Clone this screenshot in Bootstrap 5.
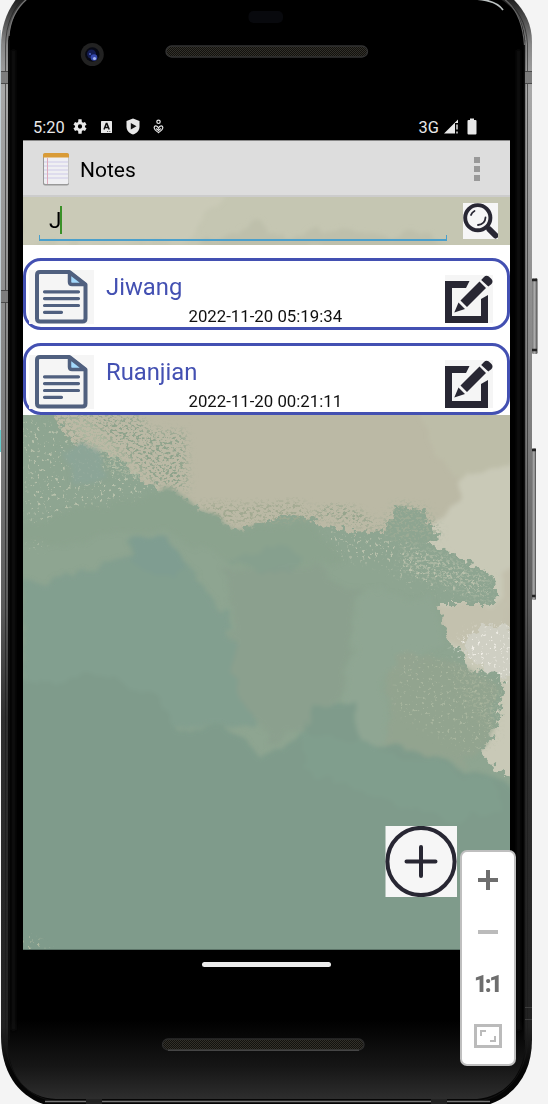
<!DOCTYPE html>
<html lang="en">
<head>
<meta charset="utf-8">
<meta name="viewport" content="width=device-width, initial-scale=1">
<title>Notes</title>
<link href="https://cdn.jsdelivr.net/npm/bootstrap@5.3.0/dist/css/bootstrap.min.css" rel="stylesheet">
<style>
body{background:#f4f4f4;font-family:Roboto,"Liberation Sans",sans-serif;overflow:hidden}
.device{width:548px;height:1104px}
.layer{left:0;top:0;z-index:0}
.front{position:relative;z-index:1}
.statusbar{height:140px;padding:0 33px 4px 10px;color:#e8e8e8;font-size:16.4px;line-height:19px}
.statusbar span{margin-bottom:-1px}
.screen{width:487px;margin-left:23px}
.appbar{height:57px;background:#ddd;border-top:1px solid #888;border-bottom:2px solid #ccc;padding:2px 30px 0 19px}
.apptitle{font-size:21px;color:#000;margin:1px 0 0 10px;line-height:24px}
.finder{height:48px;padding:6px 12px 0 16px}
.field{width:408px;height:38px;border:solid #4a9fcb;border-width:0 0 2px;font-size:22.5px;line-height:26px;padding:4px 0 0 10px;color:#000}
.field:before,.field:after{content:"";position:absolute;bottom:0;width:1px;height:4px;background:#4a9fcb}
.field:before{left:0}.field:after{right:0}
.caret{width:2px;height:28px;background:#399127;margin:-1px 0 0 -1px}
.notes{background:#fff;padding-top:13px;gap:13px;height:170px}
.note{height:72px;border:3px solid #4350b2;border-radius:18px;padding:0 14px 0 3px;background:#fff}
.note-name{font-size:23.8px;line-height:28px;color:#4350b2;margin-top:12px}
.note-date{font-size:16.8px;line-height:19px;color:#111;margin-left:82.5px;margin-top:6px}
.note-body{margin-left:12px}
.wall{height:535px;padding:411px 0 0 362px}
.homebar{width:129px;height:5px;border-radius:3px;background:#ececec;margin:12px 0 0 202px}
.zoomer{left:460px;top:850px;width:56px;height:216px;background:#fff;border:2px solid #bfbfbf;border-radius:7px;z-index:2;padding:2px 0 1px}
.zoomer>div{height:52px}
.actual-size{font-size:23px;font-weight:900;color:#6e6e6e;letter-spacing:-2.5px;line-height:24px;margin:2px 2px 0 0}
svg{display:block;flex:none}
</style>
</head>
<body>
<div class="device position-relative">

<!-- handset body -->
<svg class="layer position-absolute" width="548" height="1104" viewBox="0 0 548 1104">
<defs>
<linearGradient id="metal" x1="0" y1="0" x2="0" y2="1104" gradientUnits="userSpaceOnUse"><stop offset="0" stop-color="#222"/><stop offset=".04" stop-color="#888"/><stop offset=".08" stop-color="#a8a8a8"/><stop offset=".2" stop-color="#989898"/><stop offset=".4" stop-color="#7c7c7c"/><stop offset=".55" stop-color="#5a5a5a"/><stop offset=".65" stop-color="#303030"/><stop offset=".93" stop-color="#222"/><stop offset=".97" stop-color="#050505"/></linearGradient>
<linearGradient id="glow" x1="0" y1="1020" x2="0" y2="1098" gradientUnits="userSpaceOnUse"><stop offset="0" stop-color="#000"/><stop offset=".6" stop-color="#161616"/><stop offset="1" stop-color="#2d2d2d"/></linearGradient>
<linearGradient id="key" x1="0" x2="1"><stop offset="0" stop-color="#777"/><stop offset=".5" stop-color="#b0b0b0"/><stop offset="1" stop-color="#444"/></linearGradient>
<pattern id="mesh" width="2" height="2" patternUnits="userSpaceOnUse"><rect width="2" height="2" fill="#12110e"/><path d="M.5 0v1M1.500 1v1" stroke="#33312a"/></pattern>
<filter id="soft" filterUnits="userSpaceOnUse" x="0" y="0" width="548" height="1104"><feGaussianBlur stdDeviation="1.600"/></filter>
</defs>
<rect x="0" y="430" width="1" height="22" fill="#6cc"/><path d="M.5 30v400" stroke="#c4d0d6" stroke-width="1"/>
<path d="M17-2C6 12 1 28 1 46V1036C1 1074 20 1099 50 1106H484C514 1098 532 1074 532 1040V42C532 22 523 8 510-4Z" fill="url(#metal)"/>
<path d="M24-2C13 8 6 24 5.500 46V1040C7 1072 25 1098 55 1101H478C506 1098 525 1074 527.500 1044V44C526 22 518 8 502-2Z" fill="none" stroke="#1b1b1b" stroke-width="1" opacity=".6"/>
<path d="M29-2C14 10 8 27 8 46V1046C10 1078 28 1098 56 1099H477C505 1096 523 1076 525 1046V42C524 20 514 6 498-2Z" fill="url(#glow)"/>
<path d="M13.500 50V1030M518.500 50V1030" stroke="#242424" stroke-width="2.500" opacity=".75" filter="url(#soft)"/>
<path d="M9 40V1040M524.500 40V1040" stroke="#111" stroke-width="1.500"/>
<path d="M27-1C15 9 10 22 9 36" fill="none" stroke="#777" stroke-width="1.200"/>
<path d="M475-1Q496 0 503 10" fill="none" stroke="#bcc2c2" stroke-width="1.700"/>
<path d="M504-1C518 9 523 25 524.500 45" fill="none" stroke="#666" stroke-width="1.200"/>
<path d="M45 1101.500H490" stroke="#777" stroke-width="1.500"/>
<path d="M86 1099h16v5H86zM431 1099h16v5h-16z" fill="#222"/>
<path d="M1 71.500h7v12H1zM1 290.500h7v12H1zM525 71.500h7v12h-7z" fill="#7d7d7d"/><path d="M1 71.500h7M1 83.500h7M1 290.500h7M1 302.500h7M525 71.500h7M525 83.500h7" stroke="#4a4a4a"/>
<path d="M525 1007.500h7M525 1019.500h7" stroke="#444" stroke-width=".8"/>
<rect x="532" y="278" width="5.500" height="76" rx="1.500" fill="url(#key)"/><path d="M532 280h5M532 350h5" stroke="#222" stroke-width="2.500"/>
<rect x="532" y="448" width="4" height="152" rx="1.500" fill="url(#key)"/><path d="M532 450h4M532 596h3.500" stroke="#222" stroke-width="2.500"/>
<rect x="248.500" y="11" width="34.500" height="12" rx="5" fill="#08090d"/>
<circle cx="92.300" cy="54.500" r="11.500" fill="#222"/><circle cx="92.300" cy="54.500" r="7.200" fill="#070914"/><circle cx="91.500" cy="54" r="4.500" fill="#131b50"/><circle cx="94" cy="57.500" r="3.300" fill="#3548ad"/><circle cx="94.500" cy="58.500" r="1.600" fill="#a3b3ee"/><circle cx="90" cy="54" r="1" fill="#4e65c8"/>
<rect x="166" y="46" width="201.500" height="11" rx="5.500" fill="url(#mesh)" stroke="#333" stroke-width="1.300"/>
<rect x="162.500" y="1039" width="201.500" height="11" rx="5.500" fill="url(#mesh)" stroke="#2c2c2c" stroke-width="1.300"/><path d="M168 1050.200H359" stroke="#555"/>
</svg>

<div class="front">
<div class="statusbar screen d-flex align-items-end">
  <span>5:20</span>
  <svg width="16" height="19" style="margin-left:7px" viewBox="0 0 24 28" fill="#e8e8e8"><path fill-rule="evenodd" d="M19.400 13a7.500 7.500 0 0 0 0-2l2.400-1.800-2.300-4-2.900 1.200-1.800-1L14.400 1H9.600l-.4 4.400-1.800 1-2.900-1.200-2.300 4L4.600 11a7.500 7.500 0 0 0 0 2l-2.400 1.800 2.300 4 2.900-1.200 1.800 1 .4 4.400h4.800l.4-4.400 1.800-1 2.900 1.200 2.300-4zM12 8.800a3.200 3.200 0 1 1 0 6.400 3.200 3.200 0 0 1 0-6.400z" transform="translate(0 2)"/></svg>
  <svg width="13" height="19" style="margin-left:12px" viewBox="0 0 13 19"><rect x="1" y="4" width="11" height="12" rx=".6" fill="#e8e8e8"/><path d="M4 12.500 6.300 6.500h.6L9.200 12.500M5 10.500h3.300" stroke="#111" stroke-width="1.500" fill="none"/><path d="M7 14.500h4" stroke="#666" stroke-dasharray="1 .8"/></svg>
  <svg width="14" height="19" style="margin-left:13px" viewBox="0 0 14 19"><path d="M7 1.500 13.500 4v5.500c0 4-2.500 6.800-6.500 8-4-1.200-6.500-4-6.500-8V4z" fill="#e8e8e8"/><path d="M4.800 6v6.500L10.500 9.200z" fill="#111"/></svg>
  <svg width="11" height="19" style="margin-left:13px" viewBox="0 0 11 19" fill="none" stroke="#e8e8e8" stroke-width="1.200"><circle cx="5.500" cy="4.800" r="1.700"/><path d="M5.500 11C4.200 8 1 8.300 1.200 11c.3 2.300 2.800 3.300 4.300 4.600 1.500-1.300 4-2.300 4.300-4.600.2-2.700-3-3-4.300 0z"/><path d="M3.200 11.500l2.300 2 2.300-2"/></svg>
  <span class="ms-auto">3G</span>
  <svg width="15" height="19" style="margin-left:5px" viewBox="0 0 15 19"><path d="M0 16.500 14 2.500V6h-3v10.500z" fill="#e8e8e8"/><path d="M13 7.500v5M13 14.500v2" stroke="#ddd" stroke-width="1.500"/></svg>
  <svg width="10" height="19" style="margin-left:8px" viewBox="0 0 10 19"><path d="M3 1.500h4V3h1.500a1 1 0 0 1 1 1v12.500a1 1 0 0 1-1 1h-7a1 1 0 0 1-1-1V4a1 1 0 0 1 1-1H3z" fill="#e8e8e8"/></svg>
</div>

<div class="screen position-relative overflow-hidden">
<!-- painted wallpaper -->
<svg class="layer position-absolute" width="487" height="810" viewBox="23 140 487 810">
<defs>
<filter id="rough" x="-5%" y="-5%" width="110%" height="110%"><feTurbulence type="fractalNoise" baseFrequency=".14" numOctaves="4" seed="4"/><feDisplacementMap in="SourceGraphic" scale="16" xChannelSelector="R" yChannelSelector="G"/></filter>
<filter id="patch" x="-5%" y="-5%" width="110%" height="110%"><feTurbulence type="fractalNoise" baseFrequency=".04" numOctaves="3" seed="9"/><feDisplacementMap in="SourceGraphic" scale="22" xChannelSelector="R" yChannelSelector="G"/><feGaussianBlur stdDeviation="2"/></filter>
<filter id="fleck" x="-10%" y="-10%" width="120%" height="120%"><feGaussianBlur in="SourceGraphic" stdDeviation="5" result="s"/><feTurbulence type="fractalNoise" baseFrequency=".3 .4" numOctaves="4" seed="7"/><feColorMatrix values="0 0 0 0 0 0 0 0 0 0 0 0 0 0 0 7 0 0 0 -3.500" result="n"/><feComposite in="s" in2="n" operator="in"/></filter>
<filter id="dots" x="-10%" y="-10%" width="120%" height="120%"><feGaussianBlur in="SourceGraphic" stdDeviation="5" result="s"/><feTurbulence type="fractalNoise" baseFrequency=".32" numOctaves="4" seed="13"/><feColorMatrix values="0 0 0 0 0 0 0 0 0 0 0 0 0 0 0 9 0 0 0 -5.700" result="n"/><feComposite in="s" in2="n" operator="in"/></filter>
</defs>
<rect x="23" y="140" width="487" height="810" fill="#bbb9a5"/>
<rect x="23" y="195" width="487" height="50" fill="#c5c6b2"/>
<g filter="url(#patch)"><path d="M23 190H230L180 245H23z" fill="#cacab7"/><path d="M198 250Q225 224 252 224Q278 228 288 238Q330 224 385 238L412 228 450 250z" fill="#bebfab"/><path d="M420 410H520V470L455 478 430 440z" fill="#bdbda8"/><path d="M462 478 520 458V800H400L430 530 450 515z" fill="#c9c9b7"/><path d="M505 570H520V640H495z" fill="#c2bfac"/><path d="M430 605 510 600 500 640 440 640z" fill="#c3c1ae"/></g>
<path d="M462 640 480 630 490 624 514 628V680L485 672 468 656z" fill="#cfcfc3" filter="url(#rough)"/>
<g filter="url(#rough)"><path d="M15 405 48 412 72 440 93 450 120 458 138 478 158 488 174 492 192 504 215 518 240 530 285 516 305 518 350 532 386 530 400 505 420 510 440 538 424 543 446 550 470 562 495 578 497 604 438 604 446 640 464 652 471 672 500 674 503 690 500 716 482 754 496 770 520 782V970H10z" fill="#8ea591"/></g>
<path d="M48 410 140 415 148 430 185 432 188 490 165 488 120 465 75 450z" fill="#8fa38c" filter="url(#fleck)"/>
<path d="M195 502 245 504 300 500 315 520 220 525z" fill="#a1a991" filter="url(#fleck)"/>
<path d="M305 515 330 505 355 508 385 530z" fill="#92a28a" filter="url(#fleck)"/>
<path d="M380 525 398 502 425 508 442 535 400 545z" fill="#9dab95" filter="url(#fleck)"/>
<path d="M23 415 75 435 165 490 110 515 30 550z" fill="#b8c1ab" filter="url(#dots)"/>
<path d="M60 415 90 420 150 480 110 470z" fill="#bfc3ac" filter="url(#fleck)" opacity=".7"/>
<path d="M320 530 400 540 490 580 495 604 410 585 385 565 330 555z" fill="#bac1ac" filter="url(#dots)"/>
<path d="M405 545 445 555 490 580 490 604 450 585 400 570z" fill="#c3c6b1" filter="url(#fleck)" opacity=".55"/>
<path d="M450 650 470 630 510 625V690z" fill="#f0eee6" filter="url(#dots)"/>
<g filter="url(#patch)">
<path d="M60 445 100 450 110 480 75 485z" fill="#8ca598" opacity=".8"/>
<path d="M130 498 165 490 210 515 235 530 310 520 350 560 250 570 205 550 165 530 23 545V525z" fill="#8ba38e"/>
<path d="M23 585 75 575 132 555V539H168L190 565 218 595 233 650 245 680 255 725 23 730z" fill="#829f8f"/>
<path d="M225 570 315 565 360 590 350 650 335 710 270 745 235 690z" fill="#8ba08e"/>
<path d="M365 590 435 600 440 645 415 665 385 680 385 745 350 745 342 700z" fill="#8fa693"/>
<path d="M395 655 460 665 495 685 490 735 470 765 420 760 385 740z" fill="#94a48f" opacity=".7"/>
<path d="M10 680 60 680 110 675 160 700 175 730 222 726 265 755 301 735 311 706 358 704 360 750 400 744 440 764 475 770 530 795V970H10z" fill="#7f9b8b"/>
<path d="M135 540 168 538 185 563 175 580 132 565z" fill="#7f9d91"/>
<path d="M230 560 270 545 300 555 285 575z" fill="#849f8e" opacity=".8"/>
<path d="M300 730 358 740 410 760 490 780 505 810 450 823 360 790 305 770z" fill="#809e8d"/>
</g>
<path d="M400 650 500 675 498 740 470 755 395 710z" fill="#b2bda5" filter="url(#dots)" opacity=".7"/>
<path d="M450 660 500 690 495 740 465 700z" fill="#b4bba3" filter="url(#fleck)" opacity=".4"/>
<path d="M20 935 35 938 52 953H20z" fill="#c1c4a8" filter="url(#dots)"/>
<path d="M23 949.500H510" stroke="#5c7468"/>
</svg>

<div class="front">
  <div class="appbar d-flex align-items-center">
    <svg width="28" height="34" viewBox="0 0 28 34"><rect x="1" y="1.500" width="26" height="32" rx="2" fill="#999"/><rect x="2" y="2" width="24.500" height="30" rx="1.500" fill="#efeff2"/><path d="M1 2.500Q1 1 3 1H25Q27 1 27 2.500V5.500H1z" fill="#d99b37"/><path d="M2 10h24M2 14h24M2 18h24M2 22h24M2 26h24" stroke="#cdc9e8"/><path d="M5.500 6v26" stroke="#dda9ba"/></svg>
    <span class="apptitle">Notes</span>
    <svg class="ms-auto" width="6" height="24" viewBox="0 0 6 24" fill="#999"><path d="M0 0h6v6H0zM0 9h6v6H0zM0 18h6v6H0z"/></svg>
  </div>
  <div class="finder d-flex align-items-start justify-content-between">
    <div class="field position-relative d-flex"><span>J</span><span class="caret"></span></div>
    <svg width="35" height="36" viewBox="0 0 35 36"><path d="M0 0h35v36H0z" fill="#f6f6f6"/><g fill="none" stroke="#282733"><circle cx="14.800" cy="14.700" r="12.600" stroke-width="3.900"/><path d="M24 24l3 3" stroke-width="4"/><path d="M26.500 26.500l6 6" stroke-width="6" stroke-linecap="round"/><path d="M8 12Q8.800 9.300 11.500 8M15 22Q22 21.500 22.500 14.500" stroke-width="1.800" stroke-linecap="round"/></g></svg>
  </div>

  <div class="notes d-flex flex-column">
    <div class="note d-flex">
      <svg width="65" height="54" viewBox="0 0 65 54" style="margin-top:9px"><use href="#doc"/></svg>
      <div class="note-body"><div class="note-name">Jiwang</div><div class="note-date">2022-11-20 05:19:34</div></div>
      <svg class="ms-auto" width="48" height="48" viewBox="0 0 48 48" style="margin-top:14px"><use href="#edit"/></svg>
    </div>
    <div class="note d-flex">
      <svg width="65" height="54" viewBox="0 0 65 54" style="margin-top:9px"><use href="#doc"/></svg>
      <div class="note-body"><div class="note-name">Ruanjian</div><div class="note-date">2022-11-20 00:21:11</div></div>
      <svg class="ms-auto" width="48" height="48" viewBox="0 0 48 48" style="margin-top:14px"><use href="#edit"/></svg>
    </div>
  </div>

  <div class="wall">
    <svg width="72" height="71" viewBox="0 0 72 71"><path d="M.5 0H72V71H.5z" fill="#f6f6f6"/><g fill="none" stroke="#282733" stroke-linecap="round"><circle cx="36" cy="35.500" r="33.600" stroke-width="4"/><path d="M21.500 35.500h29M36 21v29" stroke-width="4"/></g></svg>
  </div>
</div>
</div>
<div class="homebar"></div>
</div>

<!-- emulator zoom controls -->
<div class="zoomer position-absolute d-flex flex-column">
  <div class="d-flex align-items-center justify-content-center"><svg width="20" height="20"><path d="M0 10h20M10 0v20" stroke="#6e6e6e" stroke-width="4"/></svg></div>
  <div class="d-flex align-items-center justify-content-center"><svg width="20" height="20"><path d="M0 10h20" stroke="#bbb" stroke-width="4"/></svg></div>
  <div class="d-flex align-items-center justify-content-center"><span class="actual-size">1:1</span></div>
  <div class="d-flex align-items-center justify-content-center"><svg width="28" height="24" fill="none" stroke="#bbb"><path d="M1.500 1.500h25v21h-25z" stroke-width="3"/><path d="M7 12V7h5M21 12v5h-5" stroke-width="2"/></svg></div>
</div>
</div>

<svg width="0" height="0" class="position-absolute">
<defs>
<g id="doc"><path d="M0 0h65v54H0z" fill="#f5f5f5"/><path d="M11 2H40.500L56.500 14.500V48.500Q56.500 51.500 53.500 51.500H11Q8 51.500 8 48.500V5Q8 2 11 2z" fill="#f5f5f5" stroke="#50607f" stroke-width="4" stroke-linejoin="round"/><path d="M40.500 2.500V12Q40.500 14.500 43 14.500H56z" fill="#a3d8fb" stroke="#50607f" stroke-width="3.500" stroke-linejoin="round"/><path d="M15.500 21.800h34M15.500 28.600h34M15.500 35.500h34M15.500 42.300h17" stroke="#50607f" stroke-width="3.200" stroke-linecap="round"/></g>
<g id="edit"><path d="M0 0h48v48H0z" fill="#f5f5f5"/><g fill="#282733"><path d="M0 6H24.500L21 13H7V41H36V24L43 20V48H0z"/><path d="M15.500 25.500 34.500 6.500 41 13 22 32zM13.500 27.500 20 34 9.300 37.500zM36.200 5 39 2Q41 0 43.500 1.200L46.500 4Q48.500 6.500 46.500 9L43.300 11.500z"/></g></g>
</defs>
</svg>
<script src="https://cdn.jsdelivr.net/npm/bootstrap@5.3.0/dist/js/bootstrap.bundle.min.js"></script>
</body>
</html>
